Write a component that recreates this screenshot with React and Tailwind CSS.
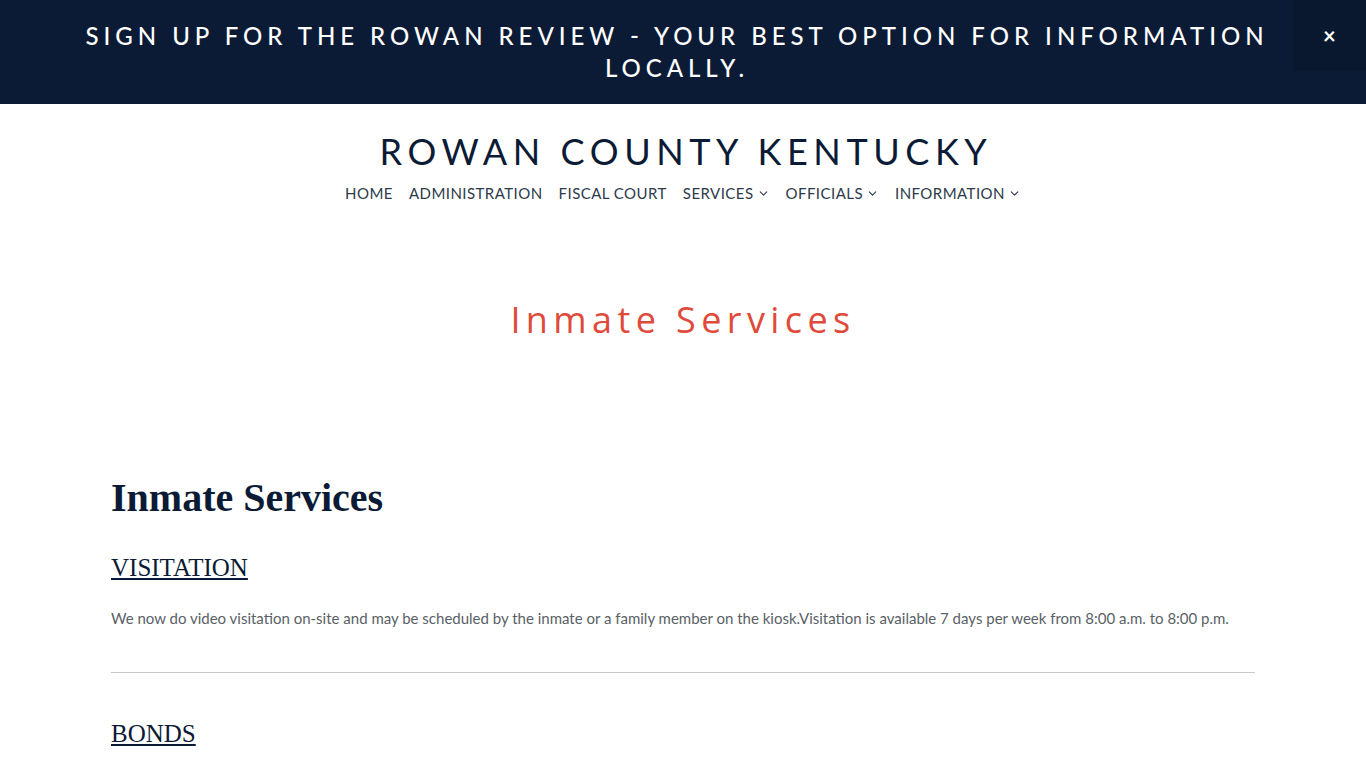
import { ChevronDown } from 'lucide-react'

const nav = [
  { label: 'HOME' },
  { label: 'ADMINISTRATION' },
  { label: 'FISCAL COURT' },
  { label: 'SERVICES', menu: true },
  { label: 'OFFICIALS', menu: true },
  { label: 'INFORMATION', menu: true },
]

export default function App() {
  return (
    <div className="min-h-screen bg-white" style={{ fontFamily: 'Lato, "Open Sans", sans-serif' }}>
      {/* sign-up banner */}
      <div className="relative h-[104px] bg-[#0c1b35] text-white">
        <p className="pt-[20px] text-center text-[24px] leading-[32px] tracking-[0.207em] font-medium pl-[72px] pr-[84px]">
          SIGN UP FOR THE ROWAN REVIEW - YOUR BEST OPTION FOR INFORMATION LOCALLY.
        </p>
        <button className="absolute right-0 top-0 w-[73px] h-[71px] bg-[#09172f] flex items-center justify-center text-[22px] font-bold">
          ×
        </button>
      </div>

      {/* header */}
      <header className="pt-[27px] text-center">
        <h1 className="text-[36px] leading-[40px] tracking-[0.155em] text-[#0c1b35] pl-[6px]">ROWAN COUNTY KENTUCKY</h1>
        <nav className="mt-[11px] flex justify-center gap-[16px] text-[15px] tracking-[0.03em] text-[#2d3a4a]">
          {nav.map((n) => (
            <a key={n.label} href="#" className="flex items-center gap-[3px]">
              {n.label}
              {n.menu && <ChevronDown size={13} strokeWidth={2} />}
            </a>
          ))}
        </nav>
      </header>

      {/* page title */}
      <div className="pt-[88px] pb-[127px] text-center">
        <h2 className="text-[36px] font-medium tracking-[0.15em] text-[#e04a3a]" style={{ fontFamily: '"Open Sans", sans-serif' }}>
          Inmate Services
        </h2>
      </div>

      {/* content */}
      <main className="mx-[111px]">
        <h2 className="text-[40px] leading-[48px] font-bold text-[#0c1b35]" style={{ fontFamily: '"Liberation Serif", serif' }}>
          Inmate Services
        </h2>
        <a href="#" className="mt-[27px] inline-block text-[25px] underline text-[#0c1b35]" style={{ fontFamily: '"Liberation Serif", serif' }}>
          VISITATION
        </a>
        <p className="mt-[21px] text-[15px] text-[#5a5f66]">
          We now do video visitation on-site and may be scheduled by the inmate or a family member on the kiosk.Visitation is available 7 days per week from 8:00 a.m. to 8:00 p.m.
        </p>
        <hr className="mt-[42px] border-[#c8c8c8]" />
        <a href="#" className="mt-[42px] inline-block text-[25px] underline text-[#0c1b35]" style={{ fontFamily: '"Liberation Serif", serif' }}>
          BONDS
        </a>
      </main>
    </div>
  )
}
